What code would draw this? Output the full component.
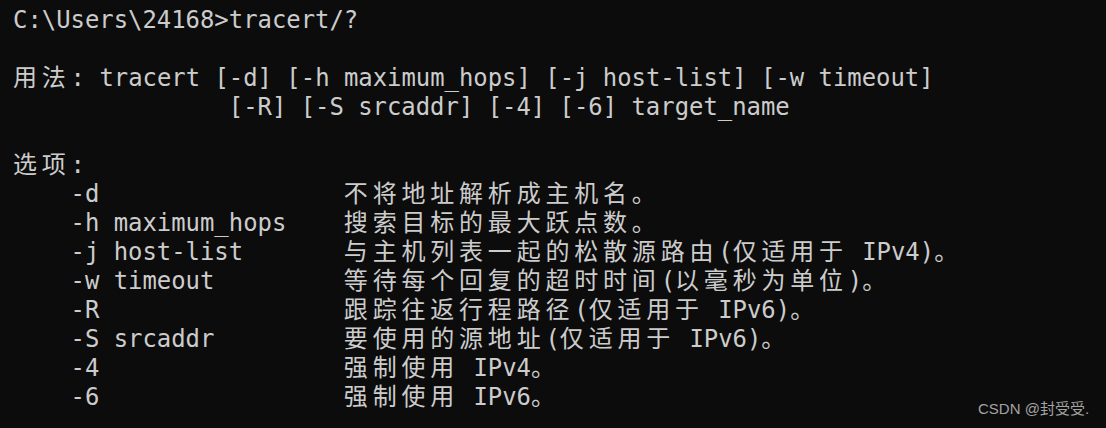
import React from "react";

const lines = [
  "C:\\Users\\24168>tracert/?",
  "",
  "用法: tracert [-d] [-h maximum_hops] [-j host-list] [-w timeout]",
  "               [-R] [-S srcaddr] [-4] [-6] target_name",
  "",
  "选项:",
  "    -d                 不将地址解析成主机名。",
  "    -h maximum_hops    搜索目标的最大跃点数。",
  "    -j host-list       与主机列表一起的松散源路由(仅适用于 IPv4)。",
  "    -w timeout         等待每个回复的超时时间(以毫秒为单位)。",
  "    -R                 跟踪往返行程路径(仅适用于 IPv6)。",
  "    -S srcaddr         要使用的源地址(仅适用于 IPv6)。",
  "    -4                 强制使用 IPv4。",
  "    -6                 强制使用 IPv6。",
];

// wide chars take two terminal cells
function Line({ text }: { text: string }) {
  const parts = text.split(/([\u3000-\u9fff\uff00-\uffef]+)/);
  return (
    <div className="h-[29px] whitespace-pre">
      {parts.map((p, i) =>
        /[\u3000-\u9fff\uff00-\uffef]/.test(p) ? (
          <span key={i} className="tracking-[4.8px] text-[24px]">{p}</span>
        ) : (
          <span key={i}>{p}</span>
        )
      )}
    </div>
  );
}

export default function App() {
  return (
    <div className="relative w-[1106px] h-[428px] overflow-hidden bg-[#0c0c0c]">
      <div className="pl-[13px] pt-[6px] text-[23.9px] leading-[29px] text-[#cccccc] font-['DejaVu_Sans_Mono','Noto_Sans_CJK_SC',monospace]">
        {lines.map((l, i) => (
          <Line key={i} text={l} />
        ))}
      </div>
      <div className="absolute left-[978px] top-[399px] text-[15px] leading-[20px] text-[#a3a3a3] font-['Liberation_Sans','Noto_Sans_CJK_SC',sans-serif]">
        CSDN @封受受.
      </div>
    </div>
  );
}
